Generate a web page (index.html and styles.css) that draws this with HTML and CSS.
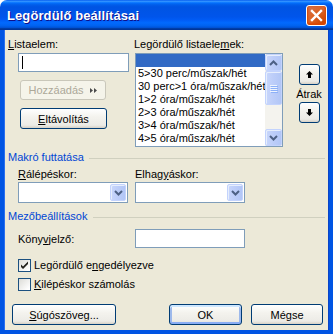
FILE: index.html
```html
<!DOCTYPE html>
<html lang="hu">
<head>
    <meta charset="UTF-8">
    <meta name="viewport" content="width=device-width, initial-scale=1.0">
    <title>Legördülő beállításai</title>
    <link rel="stylesheet" href="styles.css">
</head>
<body>

    <div class="window">
        <div class="titlebar">
            <span class="title">Legördülő beállításai</span>
            <button class="close" aria-label="Bezárás">
                <svg width="13" height="13" viewBox="0 0 13 13">
                    <path d="M2 2 L11 11 M11 2 L2 11" stroke="#fff" stroke-width="2.4" stroke-linecap="square"/>
                </svg>
            </button>
        </div>

        <div class="client">
            <div class="top">
                <div class="col-item">
                    <div class="lbl"><u>L</u>istaelem:</div>
                    <div class="textbox item-input"><span class="caret"></span></div>
                    <button class="btn btn-add" disabled><span>Hozzáadás</span>
                        <svg width="9" height="7" viewBox="0 0 9 7">
                            <path d="M1 1 L4 3.5 L1 6 Z M5 1 L8 3.5 L5 6 Z" fill="#4b4b4b"/>
                        </svg>
                    </button>
                    <button class="btn btn-remove"><span><u>E</u>ltávolítás</span></button>
                </div>

                <div class="col-list">
                    <div class="lbl">Legördülő listaele<u>m</u>ek:</div>
                    <div class="listbox">
                        <ul class="items">
                            <li class="selected">&nbsp;</li>
                            <li>5&gt;30 perc/műszak/hét</li>
                            <li>30 perc&gt;1 óra/műszak/hét</li>
                            <li>1&gt;2 óra/műszak/hét</li>
                            <li>2&gt;3 óra/műszak/hét</li>
                            <li>3&gt;4 óra/műszak/hét</li>
                            <li>4&gt;5 óra/műszak/hét</li>
                        </ul>
                        <div class="vscroll">
                            <span class="sb-btn">
                                <svg width="9" height="6" viewBox="0 0 9 6"><path d="M1 5 L4.5 1.5 L8 5" fill="none" stroke="#4d6185" stroke-width="2"/></svg>
                            </span>
                            <span class="sb-thumb">
                                <span class="grip"></span><span class="grip"></span><span class="grip"></span><span class="grip"></span>
                            </span>
                            <span class="sb-track"></span>
                            <span class="sb-btn">
                                <svg width="9" height="6" viewBox="0 0 9 6"><path d="M1 1 L4.5 4.5 L8 1" fill="none" stroke="#4d6185" stroke-width="2"/></svg>
                            </span>
                        </div>
                    </div>
                </div>

                <div class="col-move">
                    <button class="btn btn-arrow" aria-label="Fel">
                        <svg width="7" height="7" viewBox="0 0 7 7"><path d="M3.5 0 L7 3.5 L5 3.5 L5 7 L2 7 L2 3.5 L0 3.5 Z" fill="#000"/></svg>
                    </button>
                    <span class="move-lbl">Átrak</span>
                    <button class="btn btn-arrow" aria-label="Le">
                        <svg width="7" height="7" viewBox="0 0 7 7"><path d="M3.5 7 L7 3.5 L5 3.5 L5 0 L2 0 L2 3.5 L0 3.5 Z" fill="#000"/></svg>
                    </button>
                </div>
            </div>

            <div class="group-head macro-head"><span>Makró futtatása</span><span class="rule"></span></div>

            <div class="macro-row">
                <div class="field">
                    <div class="lbl"><u>R</u>álépéskor:</div>
                    <div class="combo">
                        <span class="combo-btn">
                            <svg width="9" height="6" viewBox="0 0 9 6"><path d="M1 1 L4.5 4.5 L8 1" fill="none" stroke="#4d6185" stroke-width="2"/></svg>
                        </span>
                    </div>
                </div>
                <div class="field">
                    <div class="lbl">Elhag<u>y</u>áskor:</div>
                    <div class="combo">
                        <span class="combo-btn">
                            <svg width="9" height="6" viewBox="0 0 9 6"><path d="M1 1 L4.5 4.5 L8 1" fill="none" stroke="#4d6185" stroke-width="2"/></svg>
                        </span>
                    </div>
                </div>
            </div>

            <div class="group-head field-head"><span>Mezőbeállítások</span><span class="rule"></span></div>

            <div class="bookmark-row">
                <span class="bookmark-lbl">Köny<u>v</u>jelző:</span>
                <div class="textbox bookmark-input"></div>
            </div>

            <label class="check check-first">
                <span class="box">
                    <svg width="11" height="11" viewBox="0 0 11 11"><path d="M2 4.5 L4 6.5 L9 1.5 L9 4 L4 9 L2 7 Z" fill="#21201c"/></svg>
                </span>
                <span>Legördülő e<u>n</u>gedélyezve</span>
            </label>
            <label class="check">
                <span class="box"></span>
                <span><u>K</u>ilépéskor számolás</span>
            </label>

            <div class="footer">
                <button class="btn btn-help"><span><u>S</u>úgószöveg...</span></button>
                <button class="btn btn-ok">OK</button>
                <button class="btn btn-cancel">Mégse</button>
            </div>
        </div>
    </div>

</body>
</html>
```

FILE: styles.css
```css
body {
    margin: 0;
    padding: 0;
    background-color: #fff;
    font-family: "Liberation Sans", Arial, sans-serif;
    font-size: 11px;
    color: #000;
}

u {
    text-decoration: underline;
    text-underline-offset: 1px;
}

.window {
    width: 333px;
    height: 334px;
    display: flex;
    flex-direction: column;
}

/* title bar */
.titlebar {
    height: 30px;
    flex: none;
    display: flex;
    align-items: center;
    justify-content: space-between;
    padding: 0 6px 0 7px;
    border-radius: 7px 7px 0 0;
    background: linear-gradient(180deg, #0058ee 0%, #3593ff 4%, #288eff 6%, #127dff 8%, #036ffc 10%, #0262ee 14%, #0057e5 20%, #0054e3 24%, #0055eb 56%, #005bf5 66%, #026afe 76%, #0062ef 86%, #0052d6 92%, #0040ab 94%, #003092 100%);
}

.title {
    color: #fff;
    font-weight: bold;
    font-size: 13px;
    letter-spacing: 0.1px;
    text-shadow: 1px 1px #0f1089;
    margin-top: 1px;
}

.close {
    width: 21px;
    height: 21px;
    padding: 0;
    margin-top: 1px;
    border: 1px solid #fff;
    border-radius: 3px;
    display: flex;
    align-items: center;
    justify-content: center;
    background: radial-gradient(circle at 85% 85%, #cc4600 0%, #dc6527 55%, #cd7358 100%);
    box-shadow: inset 0 -1px 2px 1px #da4600;
}

/* client area */
.client {
    flex: 1;
    background-color: #ece9d8;
    border: 4px solid #0054e3;
    border-top: none;
    box-shadow: inset 1px 0 #2a6ff0, inset -1px 0 #0a44c8;
    display: flex;
    flex-direction: column;
    padding: 0 4px 0 4px;
}

.lbl {
    line-height: 13px;
    white-space: nowrap;
}

.top {
    display: flex;
    padding-top: 8px;
}

.col-item {
    width: 126px;
    display: flex;
    flex-direction: column;
    align-items: flex-start;
}

.textbox {
    box-sizing: border-box;
    background: #fff;
    border: 1px solid #7f9db9;
}

.item-input {
    width: 111px;
    height: 19px;
    margin: 2px 0 0 10px;
    padding: 2px 0 0 3px;
}

.caret {
    display: block;
    width: 1px;
    height: 13px;
    background: #000;
}

/* buttons */
.btn {
    box-sizing: border-box;
    font-family: inherit;
    font-size: 11px;
    color: #000;
    padding: 0;
    border: 1px solid #003c74;
    border-radius: 3px;
    background: linear-gradient(180deg, #fff 0%, #f4f3ee 40%, #ecebe6 85%, #d6d0c5 100%);
    display: flex;
    align-items: center;
    justify-content: center;
    gap: 5px;
}

.btn-add {
    width: 86px;
    height: 20px;
    margin: 8px 0 0 12px;
    border-color: #c9c7ba;
    background: #f5f4ea;
    color: #aca899;
}

.btn-remove {
    width: 87px;
    height: 21px;
    margin: 8px 0 0 12px;
}

.col-list {
    width: 150px;
    display: flex;
    flex-direction: column;
}

.listbox {
    box-sizing: border-box;
    width: 148px;
    height: 94px;
    margin: 2px 0 0 1px;
    border: 1px solid #7f9db9;
    background: #fff;
    display: flex;
}

.items {
    list-style: none;
    margin: 0;
    padding: 0;
    flex: 1;
    min-width: 0;
    overflow: hidden;
}

.items li {
    height: 13px;
    line-height: 13px;
    padding-left: 2px;
    white-space: nowrap;
}

.items li.selected {
    background: #316ac5;
}

.vscroll {
    width: 17px;
    display: flex;
    flex-direction: column;
    background: #f4f3ee;
}

.sb-btn,
.sb-thumb,
.combo-btn {
    box-sizing: border-box;
    border: 1px solid #c3d3fd;
    border-radius: 2px;
    background: linear-gradient(90deg, #c8d6fb 0%, #bccdf9 50%, #b2c6f6 100%);
    box-shadow: inset 1px 1px #e6eefc;
    display: flex;
    align-items: center;
    justify-content: center;
}

.sb-btn {
    height: 17px;
}

.sb-thumb {
    height: 34px;
    flex-direction: column;
    gap: 1px;
}

.grip {
    width: 7px;
    height: 1px;
    background: #eef4fe;
    box-shadow: 1px 1px #8cb0f8;
}

.sb-track {
    flex: 1;
}

.col-move {
    width: 28px;
    margin-left: 11px;
    display: flex;
    flex-direction: column;
    align-items: center;
}

.btn-arrow {
    width: 21px;
    height: 21px;
    margin-top: 26px;
}

.move-lbl {
    line-height: 13px;
    margin: 3px 0 1px;
}

.move-lbl + .btn-arrow {
    margin-top: 0;
}

/* groups */
.group-head {
    display: flex;
    align-items: center;
    gap: 5px;
    color: #0046d5;
    line-height: 13px;
}

.rule {
    flex: 1;
    height: 1px;
    background: #d0d0bf;
    margin-top: 1px;
}

.macro-head {
    margin-top: 4px;
}

.macro-row {
    display: flex;
    padding-left: 10px;
    margin-top: 4px;
}

.field {
    width: 117px;
}

.combo {
    box-sizing: border-box;
    width: 110px;
    height: 21px;
    margin-top: 1px;
    border: 1px solid #7f9db9;
    background: #fff;
    display: flex;
    justify-content: flex-end;
    padding: 1px;
}

.combo-btn {
    width: 16px;
    height: 17px;
}

.field-head {
    margin-top: 7px;
}

.bookmark-row {
    display: flex;
    align-items: center;
    padding-left: 10px;
    margin-top: 6px;
}

.bookmark-lbl {
    width: 117px;
}

.bookmark-input {
    width: 110px;
    height: 19px;
}

.check {
    display: flex;
    align-items: center;
    gap: 3px;
    padding-left: 10px;
    margin-top: 6px;
    line-height: 13px;
}

.check-first {
    margin-top: 11px;
}

.box {
    box-sizing: border-box;
    width: 13px;
    height: 13px;
    border: 1px solid #1c5180;
    background: linear-gradient(135deg, #dcdcd7 0%, #fff 90%);
    display: flex;
    align-items: center;
    justify-content: center;
}

.footer {
    display: flex;
    margin-top: 13px;
    padding-left: 4px;
}

.footer .btn {
    height: 21px;
}

.btn-help {
    width: 104px;
}

.btn-ok {
    width: 73px;
    margin-left: 53px;
    box-shadow: inset 0 -2px #89adf4, inset 0 2px #cee7ff, inset 2px 0 #9db9eb, inset -2px 0 #9db9eb;
}

.btn-cancel {
    width: 72px;
    margin-left: 9px;
}
```
